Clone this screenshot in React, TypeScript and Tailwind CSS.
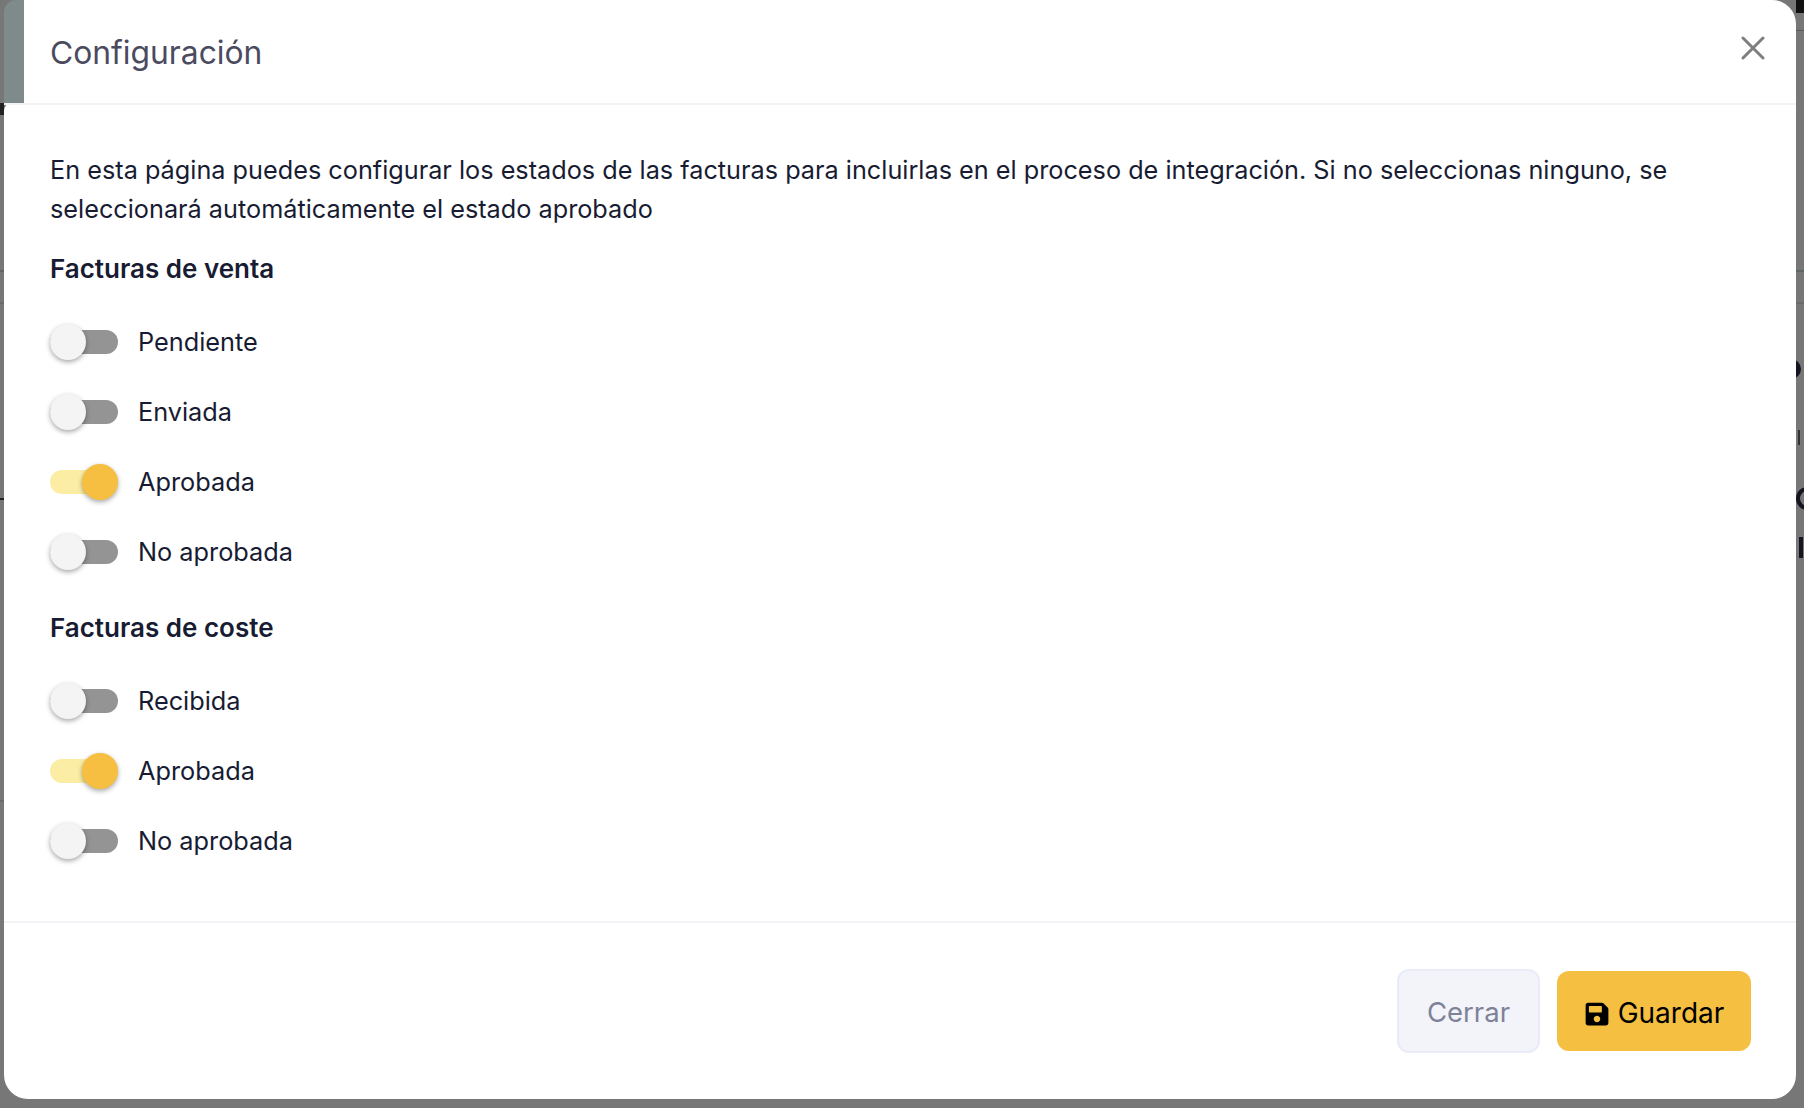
import { FaSave } from 'react-icons/fa';

// ---------- Data ----------
type Estado = { label: string; on: boolean };

const VENTA: Estado[] = [
  { label: 'Pendiente', on: false },
  { label: 'Enviada', on: false },
  { label: 'Aprobada', on: true },
  { label: 'No aprobada', on: false },
];

const COSTE: Estado[] = [
  { label: 'Recibida', on: false },
  { label: 'Aprobada', on: true },
  { label: 'No aprobada', on: false },
];

// ---------- Pieces ----------
function Toggle({ label, on }: Estado) {
  return (
    <div className="flex h-[70px] items-center">
      <div className={`relative h-[24px] w-[68px] rounded-full ${on ? 'bg-[#fbeea4]' : 'bg-[#949494]'}`}>
        <div
          className={`absolute top-[-6px] h-[36px] w-[36px] rounded-full shadow-[0_2px_5px_rgba(0,0,0,0.35)] ${
            on ? 'right-0 bg-[#f6bf41]' : 'left-0 bg-[#f4f4f4]'
          }`}
        />
      </div>
      <span className="ml-[20px] text-[25.3px] text-[#181c32]">{label}</span>
    </div>
  );
}

function Seccion({ title, items }: { title: string; items: Estado[] }) {
  return (
    <section>
      <h3 className="h-[39px] text-[26px] leading-[39px] font-semibold text-[#181c32]">{title}</h3>
      <div className="mt-[19px]">
        {items.map((item) => (
          <Toggle key={item.label} {...item} />
        ))}
      </div>
    </section>
  );
}

// ---------- Page ----------
export default function App() {
  return (
    <div className="relative h-[1108px] w-full overflow-hidden bg-[#777777] font-['Inter',sans-serif]">
      {/* page behind the backdrop, only its edges show */}
      <div className="absolute top-[30px] right-0 h-[1px] w-[10px] bg-[#555a5a]" />
      <div className="absolute top-0 right-0 h-[13px] w-[8px] bg-[#111111]" />
      <div className="absolute top-[103px] left-0 h-[12px] w-[4px] bg-[#222222]" />
      <div className="absolute top-[270px] left-0 h-[2px] w-full bg-[#5f6666]" />
      <div className="absolute top-[302px] left-0 h-[2px] w-full bg-[#6c6c6c]" />
      <div className="absolute top-[498px] left-0 h-[2px] w-[4px] bg-[#222222]" />
      <div className="absolute top-[800px] left-0 h-[2px] w-[4px] bg-[#6c6c6c]" />
      <div className="absolute top-[359px] right-[3px] h-[20px] w-[20px] rounded-full bg-[#151521]" />
      <div className="absolute top-[430px] right-[4px] h-[15px] w-[2px] bg-[#333333]" />
      <div className="absolute top-[487px] right-[-16px] h-[23px] w-[24px] rounded-full border-[4px] border-[#151521]" />
      <div className="absolute top-[537px] right-[1px] h-[21px] w-[4px] bg-[#151521]" />

      {/* Modal */}
      <div className="relative ml-[4px] flex h-[1099px] w-[1792px] flex-col">
        {/* Header */}
        <div className="flex h-[103px] shrink-0">
          <div className="w-[20px] rounded-tl-[12px] bg-[#7f8a8a]" />
          <div className="flex flex-1 items-start justify-between rounded-tr-[24px] bg-white pr-[31px] pl-[26px]">
            <h2 className="mt-[31px] text-[31.8px] leading-[44px] text-[#4b4b60]">Configuración</h2>
            <svg className="mt-[36px]" width="24" height="24" viewBox="0 0 24 24" fill="none" aria-label="Cerrar">
              <path d="M2 2 22 22M22 2 2 22" stroke="#7e7e7e" strokeWidth="3" strokeLinecap="round" />
            </svg>
          </div>
        </div>

        {/* Body */}
        <div className="flex min-h-0 flex-1 flex-col rounded-tl-[8px] rounded-b-[24px] bg-white">
          <div className="h-[820px] shrink-0 border-t-2 border-b-2 border-t-[#f2f2f7] border-b-[#f2f2f7] px-[46px] pt-[46px]">
            <p className="text-[25.25px] leading-[39px] text-[#181c32]">
              En esta página puedes configurar los estados de las facturas para incluirlas en el proceso de integración.
              Si no seleccionas ninguno, se seleccionará automáticamente el estado aprobado
            </p>
            <div className="mt-[20px]">
              <Seccion title="Facturas de venta" items={VENTA} />
            </div>
            <div className="mt-[21px]">
              <Seccion title="Facturas de coste" items={COSTE} />
            </div>
          </div>

          {/* Footer */}
          <div className="flex items-center justify-end gap-[17px] pt-[46px] pr-[45px]">
            <button className="h-[84px] w-[143px] rounded-[12px] border-2 border-[#e9ecf8] bg-[#f3f4f9] pt-[3px] text-[27.5px] text-[#7e8299]">
              Cerrar
            </button>
            <button className="flex h-[80px] w-[194px] items-center justify-center gap-[8px] rounded-[12px] bg-[#f5bf41] pt-[3px] text-[28px] text-black">
              <FaSave className="mt-[3px] h-[26px] w-[26px]" />
              Guardar
            </button>
          </div>
        </div>
      </div>
    </div>
  );
}
